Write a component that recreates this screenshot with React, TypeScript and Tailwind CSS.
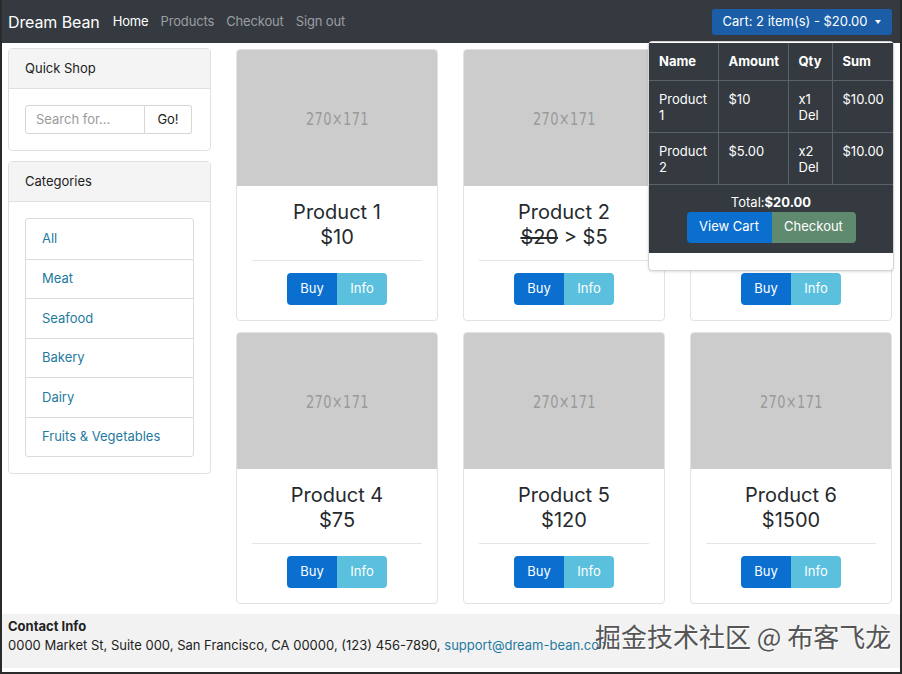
import React from "react";

type Product = { name: string; price: React.ReactNode };

const products: Product[] = [
  { name: "Product 1", price: "$10" },
  {
    name: "Product 2",
    price: (
      <>
        <s>$20</s> &gt; $5
      </>
    ),
  },
  { name: "Product 3", price: "$15" },
  { name: "Product 4", price: "$75" },
  { name: "Product 5", price: "$120" },
  { name: "Product 6", price: "$1500" },
];

const categories = ["All", "Meat", "Seafood", "Bakery", "Dairy", "Fruits & Vegetables"];

function ProductCard({ product }: { product: Product }) {
  return (
    <div className="flex flex-col rounded-[4px] border border-[#e2e2e2] bg-white overflow-hidden h-[272px]">
      <div className="h-[136px] bg-[#cccccc] flex items-center justify-center">
        <span className="text-[18px] text-[#9a9a9a] tracking-[0.5px] [font-family:'DejaVu_Sans_Condensed','DejaVu_Sans',sans-serif] scale-x-[0.8]">
          270×171
        </span>
      </div>
      <div className="flex flex-col items-center pt-[14px] px-[15px]">
        <div className="text-[20px] leading-[25px] text-[#262a2e]">{product.name}</div>
        <div className="text-[20px] leading-[25px] text-[#262a2e]">{product.price}</div>
        <div className="mt-[10px] w-full border-t border-[#e5e5e5]" />
        <div className="mt-[12px] flex h-[32px] text-[13px] text-white">
          <button className="w-[50px] rounded-l-[4px] bg-[#0b6fd0]">Buy</button>
          <button className="w-[50px] rounded-r-[4px] bg-[#5bbfde]">Info</button>
        </div>
      </div>
    </div>
  );
}

function CartDropdown() {
  const rows = [
    { name: ["Product", "1"], amount: "$10", qty: "x1", sum: "$10.00" },
    { name: ["Product", "2"], amount: "$5.00", qty: "x2", sum: "$10.00" },
  ];
  return (
    <div className="absolute left-[646px] top-[41px] w-[246px] rounded-[4px] border border-[#d4d4d4] bg-white pt-[1px] pb-[17px] shadow-sm">
      <div className="bg-[#343a40] text-white text-[13px]">
        <table className="w-full border-collapse">
          <thead>
            <tr className="h-[37px] font-bold text-left">
              <th className="w-[69px] pl-[10px] border-r border-b border-[#59616a]">Name</th>
              <th className="w-[70px] pl-[10px] border-r border-b border-[#59616a]">Amount</th>
              <th className="w-[44px] pl-[10px] border-r border-b border-[#59616a]">Qty</th>
              <th className="pl-[10px] border-b border-[#59616a]">Sum</th>
            </tr>
          </thead>
          <tbody>
            {rows.map((r) => (
              <tr key={r.name[1]} className="h-[52px] align-top leading-[16px]">
                <td className="pl-[10px] pt-[10px] border-r border-b border-[#59616a]">
                  {r.name[0]}
                  <br />
                  {r.name[1]}
                </td>
                <td className="pl-[10px] pt-[10px] border-r border-b border-[#59616a]">{r.amount}</td>
                <td className="pl-[10px] pt-[10px] border-r border-b border-[#59616a]">
                  {r.qty}
                  <br />
                  Del
                </td>
                <td className="pl-[10px] pt-[10px] border-b border-[#59616a]">{r.sum}</td>
              </tr>
            ))}
          </tbody>
        </table>
        <div className="flex flex-col items-center pt-[9px] pb-[10px]">
          <div className="leading-[16px]">
            Total:<b>$20.00</b>
          </div>
          <div className="mt-[2px] flex h-[31px]">
            <button className="w-[85px] rounded-l-[4px] bg-[#0b6fd0]">View Cart</button>
            <button className="w-[84px] rounded-r-[4px] bg-[#5f8a6f]">Checkout</button>
          </div>
        </div>
      </div>
    </div>
  );
}

export default function App() {
  return (
    <div className="relative w-[902px] h-[674px] overflow-hidden bg-white border-x-2 border-b-2 border-[#2a2a2a] [font-family:Inter,'Noto_Sans',sans-serif] text-[#212529]">
      <nav className="h-[43px] bg-[#343a40] flex items-center pl-[6px] pr-[8px]">
        <span className="text-[16px] text-white mr-[13px] tracking-[-0.1px]">Dream Bean</span>
        <div className="flex gap-[12px] text-[13px] tracking-[-0.15px]">
          <span className="text-white">Home</span>
          <span className="text-[#9b9ea2]">Products</span>
          <span className="text-[#9b9ea2]">Checkout</span>
          <span className="text-[#9b9ea2]">Sign out</span>
        </div>
        <button className="ml-auto h-[26px] w-[180px] rounded-[3px] bg-[#1b5ea7] text-[13px] text-white flex items-center justify-center gap-[8px] mt-[1px]">
          Cart: 2 item(s) - $20.00
          <span className="inline-block border-x-[3px] border-t-[4px] border-x-transparent border-t-white" />
        </button>
      </nav>

      <div className="flex pl-[6px] pt-[5px]">
        <aside className="w-[203px] flex flex-col gap-[10px] text-[13px]">
          <div className="rounded-[4px] border border-[#e0e0e0]">
            <div className="h-[40px] bg-[#f4f4f4] border-b border-[#e0e0e0] flex items-center pl-[16px] text-[13px] text-[#222]">
              Quick Shop
            </div>
            <div className="p-[16px] pb-[16px]">
              <div className="flex h-[29px] w-[167px]">
                <div className="w-[120px] rounded-l-[3px] border border-[#d6d6d6] flex items-center pl-[10px] text-[#9a9a9a]">
                  Search for...
                </div>
                <div className="w-[47px] rounded-r-[3px] border border-l-0 border-[#d6d6d6] flex items-center justify-center text-[#222]">
                  Go!
                </div>
              </div>
            </div>
          </div>
          <div className="rounded-[4px] border border-[#e0e0e0]">
            <div className="h-[40px] bg-[#f4f4f4] border-b border-[#e0e0e0] flex items-center pl-[16px] text-[13px] text-[#222]">
              Categories
            </div>
            <div className="p-[16px]">
              <div className="rounded-[3px] border border-[#dcdcdc]">
                {categories.map((c, i) => (
                  <div
                    key={c}
                    className={`h-[39.5px] flex items-center pl-[16px] text-[13px] text-[#1f7aa0] ${
                      i > 0 ? "border-t border-[#dcdcdc]" : ""
                    }`}
                  >
                    {c}
                  </div>
                ))}
              </div>
            </div>
          </div>
        </aside>

        <main className="ml-[25px] mt-[1px] grid grid-cols-[202px_202px_202px] gap-x-[25px] gap-y-[11px]">
          {products.map((p) => (
            <ProductCard key={p.name} product={p} />
          ))}
        </main>
      </div>

      <footer className="mt-[10px] h-[54px] bg-[#f2f2f2] pl-[6px] pt-[3px] text-[13px] text-[#222] leading-[19px]">
        <div className="font-bold">Contact Info</div>
        <div>
          0000 Market St, Suite 000, San Francisco, CA 00000, (123) 456-7890,{" "}
          <span className="text-[#1f7aa0]">support@dream-bean.com</span>
        </div>
      </footer>

      <CartDropdown />

      <div className="absolute left-[593px] top-[617px] text-[26px] leading-[38px] text-[#555] [font-family:'Noto_Sans_CJK_SC',sans-serif] [text-shadow:1px_1px_0_#fff]">
        掘金技术社区 @ 布客飞龙
      </div>
    </div>
  );
}
